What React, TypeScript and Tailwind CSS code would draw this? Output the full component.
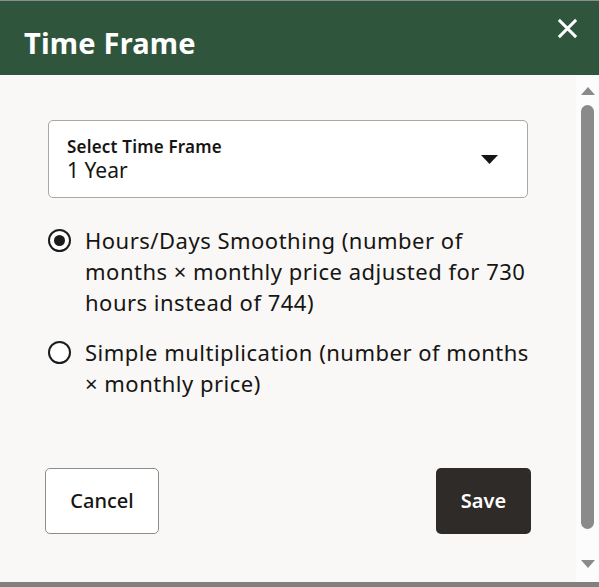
import { useState } from "react";

const font = { fontFamily: '"Noto Sans", "Open Sans", sans-serif' };

function Radio({ checked }: { checked: boolean }) {
  return (
    <span className="mt-[4px] flex h-[23px] w-[23px] shrink-0 items-center justify-center rounded-full border-2 border-[#1c1c1c] bg-white">
      {checked && <span className="h-[11px] w-[11px] rounded-full bg-[#1c1c1c]" />}
    </span>
  );
}

export default function App() {
  const [mode, setMode] = useState("smooth");

  const options = [
    {
      id: "smooth",
      label:
        "Hours/Days Smoothing (number of months × monthly price adjusted for 730 hours instead of 744)",
    },
    {
      id: "simple",
      label: "Simple multiplication (number of months × monthly price)",
    },
  ];

  return (
    <div className="flex h-[587px] w-[599px] flex-col bg-[#f9f8f6] text-[#161513]" style={font}>
      <div className="h-px bg-[#8c8c8c]" />
      <header className="flex h-[74px] items-start justify-between bg-[#30553d] pl-6 pr-5">
        <h1 className="mt-[27px] text-[29px] font-bold leading-none tracking-[0.2px] text-white">
          Time Frame
        </h1>
        <button className="mt-[16px] text-white" aria-label="Close">
          <svg width="23" height="23" viewBox="0 0 24 24" fill="none" stroke="currentColor" strokeWidth="3">
            <path d="M3 3 L21 21 M21 3 L3 21" />
          </svg>
        </button>
      </header>

      <div className="flex min-h-0 flex-1">
        <main className="flex flex-1 flex-col pb-[48px] pl-[45px] pr-[48px] pt-[45px]">
          <div className="ml-[3px] flex h-[78px] items-center justify-between rounded-[5px] border border-[#a9a7a4] bg-white pl-[18px] pr-[29px]">
            <div className="flex flex-col pt-[2px]">
              <span className="text-[17px] font-semibold leading-[21px] tracking-[0.2px]">Select Time Frame</span>
              <span className="text-[21px] leading-[27px]">1 Year</span>
            </div>
            <svg width="17" height="9" viewBox="0 0 17 9">
              <path d="M0 0 H17 L8.5 9 Z" fill="#161513" />
            </svg>
          </div>

          <div className="mr-[-8px] mt-[27px] ml-[3px] flex flex-col gap-[19px]">
            {options.map((o) => (
              <label
                key={o.id}
                className="flex cursor-pointer gap-[14px]"
                onClick={() => setMode(o.id)}
              >
                <Radio checked={mode === o.id} />
                <span className="text-[22px] leading-[31px] tracking-[0.5px]">{o.label}</span>
              </label>
            ))}
          </div>

          <div className="mt-auto flex items-center justify-between">
            <button className="h-[66px] w-[114px] rounded-[5px] border border-[#8f8d8a] bg-white text-[20px] font-medium">
              Cancel
            </button>
            <button className="mr-[-3px] h-[66px] w-[95px] rounded-[5px] bg-[#2f2b28] text-[20px] font-semibold text-white">
              Save
            </button>
          </div>
        </main>

        <aside className="flex w-[23px] flex-col items-center bg-[#fcfcfc] pb-[14px] pt-[12px]">
          <svg width="14" height="8" viewBox="0 0 14 8">
            <path d="M0 8 L7 0 L14 8 Z" fill="#8a8a8a" />
          </svg>
          <div className="mt-[10px] w-[13px] flex-1 rounded-full bg-[#8a8a8a]" />
          <svg className="mt-[31px]" width="14" height="8" viewBox="0 0 14 8">
            <path d="M0 0 H14 L7 8 Z" fill="#8a8a8a" />
          </svg>
        </aside>
      </div>
      <div className="h-[5px] bg-[#808080]" />
    </div>
  );
}
